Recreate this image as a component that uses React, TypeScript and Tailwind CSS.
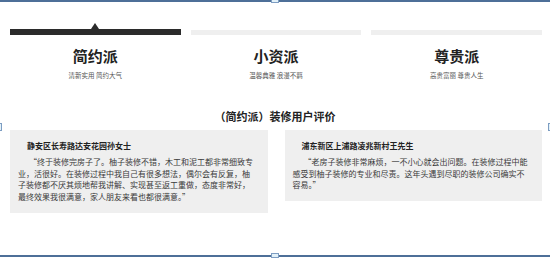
const font = "font-['Noto_Sans_CJK_SC','Noto_Sans',sans-serif]";

const tabs = [
  { title: "简约派", sub: "清新实用 简约大气", active: true },
  { title: "小资派", sub: "温馨典雅 浪漫不羁", active: false },
  { title: "尊贵派", sub: "高贵富丽 尊贵人生", active: false },
];

const reviews = [
  {
    name: "静安区长寿路达安花园孙女士",
    text: "“终于装修完房子了。柚子装修不错，木工和泥工都非常细致专业，活很好。在装修过程中我自己有很多想法，偶尔会有反复，柚子装修都不厌其烦地帮我讲解、实现甚至返工重做，态度非常好，最终效果我很满意，家人朋友来看也都很满意。”",
  },
  {
    name: "浦东新区上浦路凌兆新村王先生",
    text: "“老房子装修非常麻烦，一不小心就会出问题。在装修过程中能感受到柚子装修的专业和尽责。这年头遇到尽职的装修公司确实不容易。”",
  },
];

export default function App() {
  return (
    <div className={`relative h-[258px] w-[550px] overflow-hidden bg-white ${font}`}>
      <SelectionFrame />

      <div className="grid grid-cols-3 gap-[10px] pl-[10px] pr-[8px] pt-[23px]">
        {tabs.map((tab) => (
          <div key={tab.title} className="flex flex-col items-center">
            <div className="flex h-[6px] w-full items-end justify-center">
              {tab.active && (
                <span className="h-0 w-0 border-x-[4px] border-b-[6px] border-x-transparent border-b-[#2b2b2b]" />
              )}
            </div>
            <div className={`w-full ${tab.active ? "h-[6px] bg-[#2b2b2b]" : "mt-[1px] h-[5px] bg-[#efefef]"}`} />
            <h2 className="mt-[12px] text-[15px] font-bold leading-[18px] text-[#222]">{tab.title}</h2>
            <p className="mt-[6px] text-[6.5px] leading-[9px] text-[#555]">{tab.sub}</p>
          </div>
        ))}
      </div>

      <h3 className="mt-[29px] text-center text-[11px] font-bold leading-[14px] text-[#222]">
        （简约派）装修用户评价
      </h3>

      <div className="mt-[7px] grid grid-cols-2 items-start gap-[17px] pl-[10px] pr-[8px]">
        {reviews.map((r) => (
          <article key={r.name} className="bg-[#efefef] pb-[10px] pl-[8px] pr-[12px] pt-[10px]">
            <p className="pl-[9px] text-[8px] font-bold leading-[12px] text-[#222]">{r.name}</p>
            <p className="mt-[4px] indent-[11px] text-[8px] leading-[11.7px] text-[#3a3a3a]">{r.text}</p>
          </article>
        ))}
      </div>
    </div>
  );
}

function SelectionFrame() {
  const handle = "absolute border border-[#7d9dc2] bg-[#e2f1f9]";
  return (
    <>
      <div className="absolute left-0 right-0 top-0 h-[2px] bg-[#4d6f98]" />
      <div className="absolute bottom-[1px] left-0 right-0 h-[2px] bg-[#4d6f98]" />
      <div className={`${handle} left-[271px] top-[-1px] h-[4px] w-[8px]`} />
      <div className={`${handle} bottom-[0px] left-[271px] h-[5px] w-[8px]`} />
      <div className={`${handle} left-[-1px] top-[123px] h-[8px] w-[3px]`} />
      <div className={`${handle} right-[-1px] top-[123px] h-[8px] w-[3px]`} />
    </>
  );
}
